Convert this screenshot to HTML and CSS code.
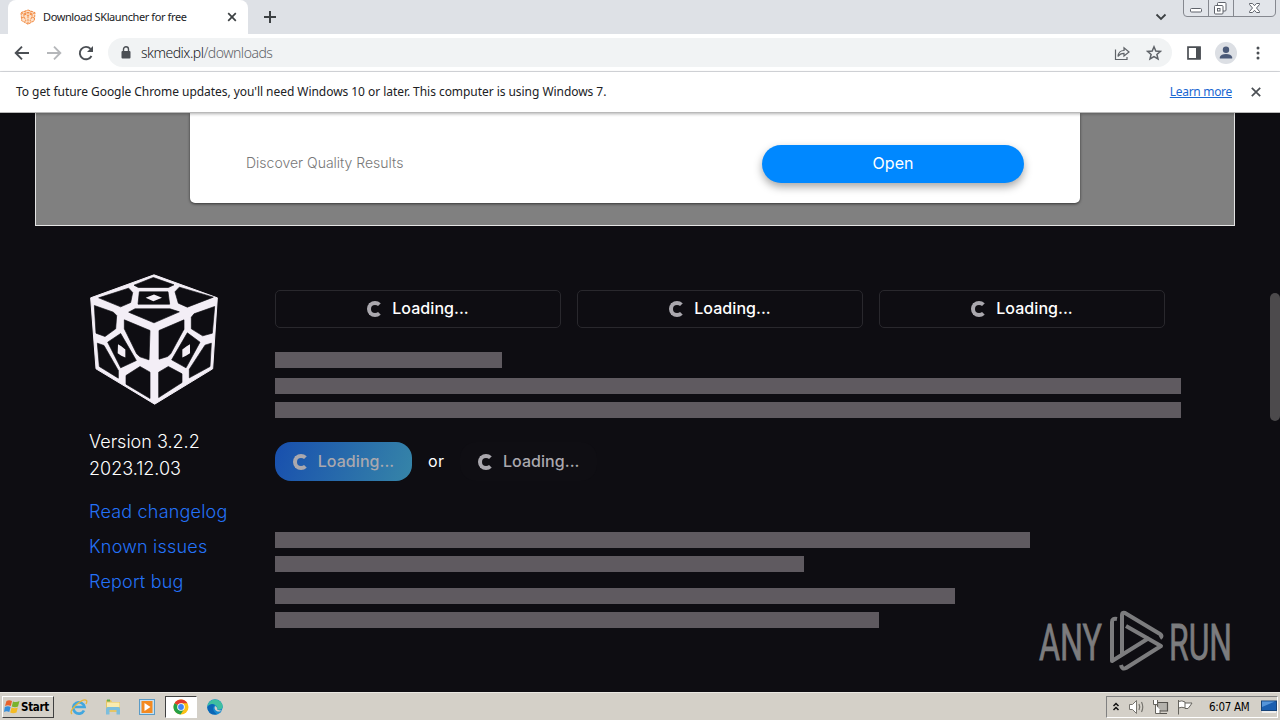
FILE: index.html
```
<!DOCTYPE html>
<html lang="en">
<head>
    <meta charset="UTF-8">
    <title>Download SKlauncher for free</title>
    <link rel="stylesheet" href="styles.css">
</head>
<body>
    <!-- tabs -->
    <div class="tab-strip">
        <div class="tab">
            <svg class="favicon" viewBox="0 0 16 16" width="16" height="16">
                <path d="M8 0.8L15 3.5L14.4 11.8L8 15.4L1.6 11.8L1 3.5Z" fill="#fde0c8"/>
                <path d="M8 1L15 3.6L14.3 11.7L8 15.2L1.7 11.7L1 3.6ZM1 3.6L8 6.5L15 3.6M8 6.5V15M4 2.5L12 5M12 2.5L4 5M4 5V8L1.7 9M4 8L6 11.500L4 13M12 5V8L14.300 9M12 8L10 11.500L12 13" fill="none" stroke="#f28c45" stroke-width="1" stroke-dasharray="2.500 .7"/>
            </svg>
            <span class="tab-title">Download SKlauncher for free</span>
            <svg class="tab-close" viewBox="0 0 10 10" width="10" height="10"><path d="M1.200 1.200L8.800 8.800M8.800 1.200L1.200 8.800" stroke="#3c4043" stroke-width="1.700"/></svg>
        </div>
        <svg class="new-tab" viewBox="0 0 12 12" width="12" height="12"><path d="M6 0V12M0 6H12" stroke="#3c4043" stroke-width="2"/></svg>
        <svg class="tab-search" viewBox="0 0 12 8" width="12" height="8"><path d="M1.500 1.500L6 6L10.500 1.500" fill="none" stroke="#3c4043" stroke-width="1.800"/></svg>
        <svg class="window-buttons" viewBox="0 0 94 18" width="94" height="18">
            <path d="M.5 -1V13Q.5 16.500 4 16.500H88Q92.500 16.500 92.500 12V-1M25.500 0V16M50.500 0V16" fill="#e2e5ea" stroke="#85888f"/>
            <rect x="7.500" y="8.500" width="11" height="3.500" rx="1" fill="#fff" stroke="#5f636b"/>
            <rect x="34.500" y="2.500" width="8.500" height="8.500" rx="1" fill="#fff" stroke="#5f636b"/>
            <rect x="31.500" y="5.500" width="8.500" height="8.500" rx="1" fill="#fff" stroke="#5f636b"/>
            <rect x="34.500" y="8.500" width="2.500" height="2.500" fill="#fff" stroke="#5f636b"/>
            <path d="M66.500 3.500H69.500L71.500 5.700L73.500 3.500H76.500V4.500L73.500 8L76.500 11.500V12.500H73.500L71.500 10.300L69.500 12.500H66.500V11.500L69.500 8L66.500 4.500Z" fill="#fff" stroke="#5f636b"/>
        </svg>
    </div>

    <!-- address bar -->
    <div class="toolbar">
        <svg class="nav" viewBox="0 0 16 16" width="16" height="16"><path d="M15 8H2M8 1.700L1.700 8L8 14.300" fill="none" stroke="#4b4f54" stroke-width="1.900"/></svg>
        <svg class="nav" viewBox="0 0 16 16" width="16" height="16"><path d="M1 8H14M8 1.700L14.300 8L8 14.300" fill="none" stroke="#b5b7ba" stroke-width="1.900"/></svg>
        <svg class="nav" viewBox="0 0 16 16" width="16" height="16"><path d="M13.500 11A6.200 6.200 0 1 1 12.600 3.900" fill="none" stroke="#4b4f54" stroke-width="1.900"/><path d="M15 1V7H9Z" fill="#4b4f54"/></svg>
        <div class="omnibox">
            <svg viewBox="0 0 10 13" width="10" height="13"><rect x=".5" y="5" width="9" height="7.500" rx="1" fill="#4b4f54"/><path d="M2.500 5.500V3.300A2.500 2.500 0 0 1 7.500 3.300V5.500" fill="none" stroke="#4b4f54" stroke-width="1.400"/></svg>
            <span class="url">skmedix.pl<span class="path">/downloads</span></span>
            <svg class="share" viewBox="0 0 16 16" width="16" height="16"><path d="M1.500 4.500V14.500H13V12M4 11.500Q4.500 5.500 10 5.500V2.800L15 7L10 11V8.300Q6 8.300 4 11.500Z" fill="none" stroke="#5f6368" stroke-width="1.200"/></svg>
            <svg viewBox="0 0 16 16" width="16" height="16"><path d="M8 1.800L9.800 6L14.400 6.400L10.900 9.400L12 13.900L8 11.500L4 13.900L5.100 9.400L1.600 6.400L6.200 6Z" fill="none" stroke="#5f6368" stroke-width="1.500"/></svg>
        </div>
        <svg class="side-panel" viewBox="0 0 14 14" width="14" height="14"><path d="M1 1.200H13V12.800H1Z" fill="none" stroke="#4b4f54" stroke-width="1.700"/><path d="M9 1H13.500V13H9Z" fill="#4b4f54"/></svg>
        <svg class="avatar" viewBox="0 0 22 22" width="22" height="22"><circle cx="11" cy="11" r="11" fill="#dcdfe4"/><circle cx="11" cy="7.800" r="3.200" fill="#4b5a78"/><path d="M4.800 16.500V15Q6 12 11 12T17.200 15V16.500Z" fill="#4b5a78"/></svg>
        <svg class="menu" viewBox="0 0 4 14" width="4" height="14"><g fill="#4b4f54"><circle cx="2" cy="2" r="1.500"/><circle cx="2" cy="7" r="1.500"/><circle cx="2" cy="12" r="1.500"/></g></svg>
    </div>

    <div class="infobar">
        <span class="message">To get future Google Chrome updates, you'll need Windows 10 or later. This computer is using Windows 7.</span>
        <a class="learn-more">Learn more</a>
        <svg viewBox="0 0 10 10" width="10" height="10"><path d="M.8 .8L9.200 9.200M9.200 .8L.8 9.200" stroke="#4b4f54" stroke-width="1.700"/></svg>
    </div>

    <div class="page">
        <div class="ad">
            <div class="ad-card">
                <span class="ad-text">Discover Quality Results</span>
                <div class="ad-button">Open</div>
            </div>
        </div>

        <div class="content">
            <div class="sidebar">
                <svg class="logo" viewBox="60 41 384 392" width="128" height="131">
                    <path fill="#f3eef6" stroke="#f3eef6" stroke-width="3" stroke-linejoin="round" d="M252 43L442 112L428 325L254 431L78 325L62 112Z"/>
                    <g fill="#0e0d12" stroke="#0e0d12" stroke-width="2" stroke-linejoin="round">
                        <!-- top side -->
                        <path d="M250 51L312 73L295 81H205L192 74Z"/>
                        <path d="M176 83L188 96L182 126L152 139L86 112Z"/>
                        <path d="M328 80L430 110L352 140L325 128L315 94Z"/>
                        <path d="M208 94H294L299 131H204Z"/>
                        <path d="M195 145H300L328 154L252 187L176 155Z"/>
                        <!-- left side -->
                        <path d="M73 135L130 155L140 165L137 205L105 228L78 218Z"/>
                        <path d="M163 178L240 210L237 298L210 289L200 280L163 205Z"/>
                        <path d="M152 219L199 300L152 322L113 245Z"/>
                        <path d="M82 248L102 255L145 330V353L88 318Z"/>
                        <path d="M168 345L210 318L240 335V414L168 371Z"/>
                        <!-- right side -->
                        <path d="M434 138L372 160L364 170V205L398 226L427 218Z"/>
                        <path d="M342 178L267 210V296L293 288L302 280L342 206Z"/>
                        <path d="M352 217L390 245L348 322L305 298Z"/>
                        <path d="M424 248L405 254L358 326V352L420 318Z"/>
                        <path d="M266 335L295 318L336 340V366L266 411Z"/>
                    </g>
                    <path fill="#f3eef6" d="M252 102L276 112L250 122L227 112ZM144 251L154 257L166 267V291L154 286L143 278ZM360 251L350 257L337 267V291L348 286L360 278Z"/>
                </svg>
                <p class="version">Version 3.2.2<br>2023.12.03</p>
                <a class="w-changelog">Read changelog</a>
                <a class="w-issues">Known issues</a>
                <a class="w-report">Report bug</a>
            </div>

            <div class="main">
                <div class="tabs">
                    <div class="box"><i class="spinner"></i>Loading...</div>
                    <div class="box"><i class="spinner"></i>Loading...</div>
                    <div class="box"><i class="spinner"></i>Loading...</div>
                </div>
                <div class="bar title-bar"></div>
                <div class="bar"></div>
                <div class="bar"></div>
                <div class="actions">
                    <div class="pill blue"><i class="spinner"></i>Loading...</div>
                    <span class="or">or</span>
                    <div class="pill"><i class="spinner"></i>Loading...</div>
                </div>
                <div class="bar bar-a"></div>
                <div class="bar bar-b"></div>
                <div class="bar bar-c"></div>
                <div class="bar bar-d"></div>
            </div>
        </div>

        <div class="scroll-thumb"></div>
        <svg class="watermark" viewBox="0 0 200 64" width="200" height="64">
            <g fill="#7c7c7e" stroke="#7c7c7e" stroke-width=".8" font-family="Roboto, sans-serif" font-size="50">
                <text x="1" y="50.500" textLength="63" lengthAdjust="spacingAndGlyphs">ANY</text>
                <text x="131" y="50.500" textLength="63" lengthAdjust="spacingAndGlyphs">RUN</text>
            </g>
            <g fill="none" stroke="#7c7c7e" stroke-width="4" stroke-linejoin="round">
                <path d="M79 10Q74 9 74 13V52L111 29"/>
                <path d="M84 46V6Q84 3 87 4L122 25Q125 27 122 29"/>
                <path d="M88 17L123 37L88 59Q84 61 83 56"/>
            </g>
        </svg>
    </div>

    <!-- windows taskbar -->
    <div class="taskbar">
        <div class="start">
            <svg viewBox="0 0 16 16" width="16" height="16"><path d="M2.500 2Q5 .5 8 2L6.800 7Q4 5.500 1 7Z" fill="#e8622c"/><path d="M9 2.400Q12 3.800 15.500 2L14 7.500Q11 9 7.800 7.400Z" fill="#79b32d"/><path d="M.8 8Q4 6.500 6.600 8L5.300 13Q2.500 11.500 0 13Z" fill="#368edb"/><path d="M7.600 8.400Q10.500 10 13.800 8.500L12.500 13.500Q9 15 6.200 13.400Z" fill="#f4bb24"/></svg>
            <span>Start</span>
        </div>
        <div class="task">
            <svg viewBox="0 0 18 18" width="18" height="18"><path d="M14 12.500A5.700 5.700 0 1 1 14.500 9H5" fill="none" stroke="#42a7df" stroke-width="2.700"/><path d="M2 16Q-1 13.500 6 7Q14 0 16.500 2.500Q17.300 3.500 16 6" fill="none" stroke="#e7b63b" stroke-width="1.300"/></svg>
        </div>
        <div class="task">
            <svg viewBox="0 0 18 18" width="18" height="18"><path d="M2 2H7L8 4H16V14H2Z" fill="#e5c566"/><path d="M3 1.500H6V3.500H3Z" fill="#68ad50"/><path d="M3 4.500H15.500V9H3Z" fill="#faebae"/><path d="M2 16.500V11Q2 9 4 9H14Q16 9 16 11V16.500H12.500V12H5.500V16.500Z" fill="#7cbedd"/></svg>
        </div>
        <div class="task">
            <svg viewBox="0 0 18 18" width="18" height="18"><rect x="1.500" y="1.500" width="15" height="15" fill="#c5e0f1" stroke="#5b9bc6"/><rect x="3.500" y="3" width="11" height="12" fill="#f48a20"/><path d="M6.500 5L12.500 9L6.500 13Z" fill="#fff"/></svg>
        </div>
        <div class="task active">
            <svg viewBox="0 0 16 16" width="16" height="16"><circle cx="8" cy="8" r="7.500" fill="#fbc116"/><path d="M8 8L1.500 4.200A7.500 7.500 0 0 1 14.500 4.300H8Z" fill="#e33b2e"/><path d="M8 8L1.500 4.200A7.500 7.500 0 0 0 7.500 15.500L11.300 9.800Z" fill="#24a047"/><circle cx="8" cy="8" r="3.800" fill="#fff"/><circle cx="8" cy="8" r="2.900" fill="#4285f4"/></svg>
        </div>
        <div class="task">
            <svg viewBox="0 0 16 16" width="16" height="16"><circle cx="8" cy="8" r="7.800" fill="#1689cf"/><path d="M.3 7A7.800 7.800 0 0 1 15.800 8Q15 11 10 10.500Q11 9 9.500 7Q6 3.500 .3 7Z" fill="#3fbfa0"/><path d="M.2 8Q4 3 8 6Q4.500 9 7.500 13L10 15.500Q1 16.500 .2 8Z" fill="#0b66b6"/><path d="M8 7Q6.500 10.500 10 12.300Q12 13 14.500 11.700L16 9V12Q11 11 10 10.500Q11 8.500 8 7Z" fill="#d4d0c8"/></svg>
        </div>
        <div class="tray">
            <svg viewBox="0 0 8 10" width="8" height="10"><path d="M1.500 4L4 1.500L6.500 4M1.500 8L4 5.500L6.500 8" fill="none" stroke="#111" stroke-width="1.500"/></svg>
            <svg class="sound" viewBox="0 0 18 16" width="18" height="16"><path d="M1.500 5.500H4.500L8.500 1.500V14.500L4.500 10.500H1.500Z" fill="#fff" stroke="#77756f"/><path d="M11 5Q12.500 8 11 11M13.500 3Q16 8 13.500 13" fill="none" stroke="#77756f" stroke-width="1.200"/></svg>
            <svg class="network" viewBox="0 0 18 16" width="18" height="16"><path d="M5.500 3.500H15.500V12H5.500ZM7.500 14.500H15" fill="#b4b2ac" stroke="#55534e" stroke-width="1.200"/><path d="M1.500 1V5.500H5.500V1M3.500 5.500V14.500H8V11" fill="#fff" stroke="#66645e"/></svg>
            <svg class="flag" viewBox="0 0 18 16" width="18" height="16"><path d="M2.500 1V15.500M2.500 2.500Q6 1 9 3V9Q6 7.500 2.500 9M9 4H16L14 7L12 9.500H9" fill="#fff" stroke="#66645e"/></svg>
            <span class="clock">6:07 AM</span>
            <svg class="desktop" viewBox="0 0 16 14" width="16" height="14"><rect x=".5" y="1" width="15" height="9.500" fill="#1b5fb0" stroke="#174479"/><path d="M1 1.500H14L1 7Z" fill="#5595da"/><path d="M1 12H15" stroke="#f7f7f7" stroke-width="1.500"/></svg>
        </div>
    </div>
</body>
</html>
```
FILE: styles.css
```
*{
    box-sizing: border-box;
}

body{
    display: flex;
    flex-direction: column;
    margin: 0;
    width: 1280px;
    height: 720px;
    overflow: hidden;
    font-family: "DejaVu Sans Condensed", "DejaVu Sans", sans-serif;
    font-size: 12px;
    color: #202124;
    background-color: #0e0d12;
}

svg{
    display: block;
    flex: none;
}

p{
    margin: 0;
}

/* browser */
.tab-strip{
    display: flex;
    flex: none;
    height: 34px;
    padding-left: 8px;
    background-color: #dee1e6;
}

.tab{
    display: flex;
    align-items: center;
    width: 240px;
    border-radius: 8px 8px 0 0;
    padding: 0 11px 0 12px;
    background-color: #fff;
}

.tab-title{
    flex: 1;
    margin-left: 7px;
    padding-bottom: 1px;
    font-family: "Noto Sans", sans-serif;
    font-size: 11px;
    letter-spacing: -.4px;
    white-space: nowrap;
}

.new-tab{
    margin: 11px auto 0 16px;
}

.tab-search{
    margin: 13px 16px 0 0;
}

.window-buttons{
    margin-right: 3px;
}

.toolbar{
    display: flex;
    align-items: center;
    flex: none;
    height: 38px;
    padding: 0 20px 0 14px;
    border-bottom: 1px solid #dadce0;
    background-color: #fff;
}

.nav{
    margin-right: 16px;
}

.omnibox{
    display: flex;
    align-items: center;
    width: 1064px;
    height: 29px;
    margin-left: -2px;
    padding: 0 10px 0 13px;
    border-radius: 15px;
    background-color: #f1f3f4;
}

.url{
    flex: 1;
    margin-left: 10px;
    font-family: "Noto Sans", sans-serif;
    font-size: 14px;
    font-weight: 300;
    letter-spacing: -.5px;
}

.path{
    color: #5f6368;
}

.share{
    margin-right: 16px;
}

.side-panel{
    margin-left: 15px;
}

.avatar{
    margin: 0 auto 0 14px;
}

.infobar{
    display: flex;
    align-items: center;
    position: relative;
    z-index: 1;
    flex: none;
    height: 41px;
    padding: 0 19px 1px 16px;
    border-bottom: 1px solid #b9b9b9;
    font-family: "Noto Sans", sans-serif;
    letter-spacing: -.05px;
    background-color: #fff;
    box-shadow: 0 1px 3px rgba(0, 0, 0, .3);
}

.message{
    flex: 1;
}

.learn-more{
    margin-right: 19px;
    letter-spacing: -.3px;
    color: #1967d2;
    text-decoration: underline;
}

/* page */
.page{
    position: relative;
    flex: 1;
    overflow: hidden;
    font-family: Inter, sans-serif;
    color: #fff;
}

.ad{
    width: 1200px;
    height: 113px;
    margin-left: 35px;
    border: 1px solid #e4e4e4;
    border-top: 0;
    background-color: #808080;
}

.ad-card{
    display: flex;
    align-items: center;
    justify-content: space-between;
    width: 890px;
    height: 90px;
    margin-left: 154px;
    padding: 12px 56px 0;
    border-radius: 0 0 5px 5px;
    background-color: #fff;
    box-shadow: 0 1px 3px rgba(0, 0, 0, .6);
}

.ad-text{
    padding-bottom: 3px;
    font-size: 14px;
    font-weight: 300;
    color: #777;
}

.ad-button{
    width: 262px;
    height: 38px;
    border-radius: 19px;
    font-size: 16px;
    line-height: 37px;
    text-align: center;
    background-color: #08f;
    box-shadow: 0 4px 9px rgba(0, 0, 0, .35);
}

.content{
    display: flex;
    padding: 48px 0 0 89px;
}

.sidebar{
    display: flex;
    flex-direction: column;
    width: 186px;
    font-size: 18px;
    font-weight: 300;
}

.logo{
    margin: 0 0 23px 1px;
}

.version{
    margin-bottom: 12px;
    line-height: 27px;
}

.sidebar a{
    line-height: 35px;
    letter-spacing: .2px;
    color: #2472f8;
}

.main{
    width: 906px;
    padding-top: 16px;
    font-size: 16px;
}

.tabs{
    display: flex;
    gap: 16px;
    margin-bottom: 24px;
}

.box, .pill{
    display: flex;
    align-items: center;
    justify-content: center;
    gap: 9px;
    padding-bottom: 2px;
    font-weight: 500;
    letter-spacing: .05px;
}

.box{
    width: 286px;
    height: 38px;
    border: 1px solid #29282d;
    border-radius: 5px;
}

.spinner{
    width: 16px;
    height: 16px;
    margin-top: 2px;
    border: 4px solid #aaa8ae;
    border-right-color: transparent;
    border-radius: 50%;
}

.bar{
    height: 16px;
    margin-bottom: 8px;
    background-color: #5f5a60;
}

.title-bar{
    width: 227px;
    margin-bottom: 10px;
}

.actions{
    display: flex;
    align-items: center;
    gap: 16px;
    margin: 24px 0 51px;
}

.or{
    padding-bottom: 2px;
    letter-spacing: .3px;
}

.pill{
    width: 137px;
    height: 39px;
    border-radius: 16px;
    color: #aaa8ae;
    background-color: #0f0e13;
}

.blue{
    background: linear-gradient(110deg, #184fae, #3685a8);
}

.bar-a{
    width: 755px;
}

.bar-b{
    width: 529px;
    margin-bottom: 16px;
}

.bar-c{
    width: 680px;
}

.bar-d{
    width: 604px;
}

.scroll-thumb{
    position: absolute;
    top: 180px;
    right: 0;
    width: 10px;
    height: 128px;
    border-radius: 5px;
    background-color: #4c4a4c;
}

.watermark{
    position: absolute;
    top: 496px;
    left: 1038px;
}

/* taskbar */
.taskbar{
    display: flex;
    align-items: center;
    flex: none;
    height: 28px;
    padding: 0 2px;
    border-top: 1px solid #e9e7e2;
    background-color: #d4d0c8;
}

.start{
    display: flex;
    align-items: center;
    gap: 1px;
    width: 52px;
    height: 22px;
    margin-right: 9px;
    padding-left: 1px;
    border: 1px solid;
    border-color: #fff #404040 #404040 #fff;
    font-size: 11.500px;
    font-weight: 700;
    letter-spacing: -.3px;
    color: #000;
}

.task{
    display: flex;
    align-items: center;
    justify-content: center;
    width: 32px;
    height: 22px;
    margin-right: 2px;
}

.active{
    border: 1px solid;
    border-color: #404040 #fff #fff #404040;
    background-color: #fff;
}

.tray{
    display: flex;
    align-items: center;
    width: 172px;
    height: 22px;
    margin-left: auto;
    padding-left: 5px;
    border: 1px solid;
    border-color: #808080 #fff #fff #808080;
    color: #000;
}

.sound{
    margin-left: 8px;
}

.network, .flag{
    margin-left: 6px;
}

.clock{
    margin-left: 15px;
    font-size: 11.500px;
    letter-spacing: -.3px;
    white-space: nowrap;
}

.desktop{
    margin-left: auto;
}
```
